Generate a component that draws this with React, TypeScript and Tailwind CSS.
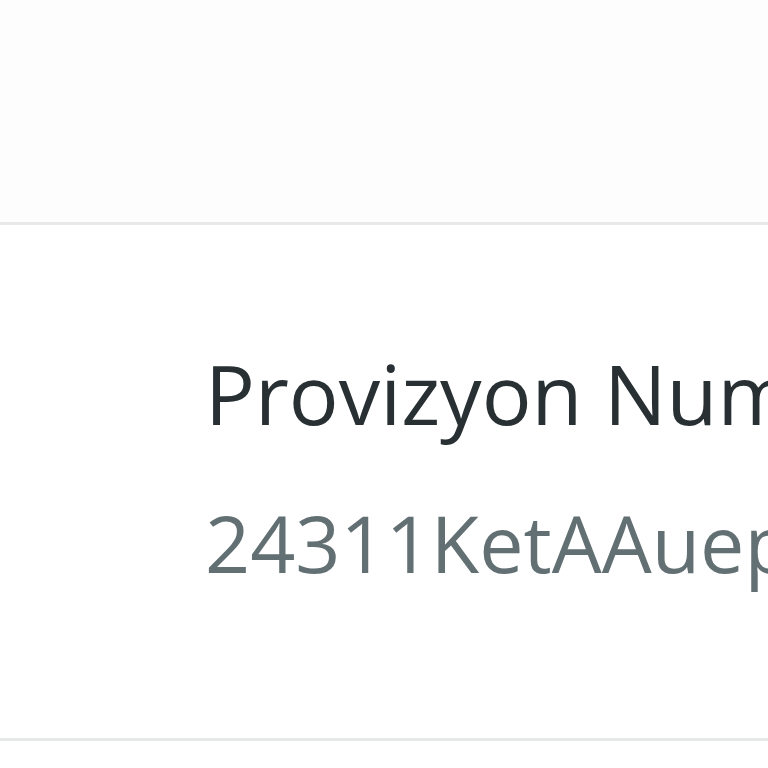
export default function App() {
  return (
    <div
      className="w-[768px] h-[768px] bg-white overflow-hidden"
      style={{ fontFamily: '"Open Sans", "Noto Sans", sans-serif' }}
    >
      <div className="h-[222px] bg-[#fdfdfd]" />
      <div className="border-t-[3px] border-b-[3px] border-[#e7e8e8] bg-white">
        <div className="pl-[205px] pt-[118px] pb-[145px] whitespace-nowrap">
          <div className="text-[83px] leading-[100px] text-[#283033]">
            Provizyon Numarası
          </div>
          <div className="mt-[50px] text-[79px] leading-[100px] text-[#627073]">
            24311KetAAuep9
          </div>
        </div>
      </div>
    </div>
  );
}
